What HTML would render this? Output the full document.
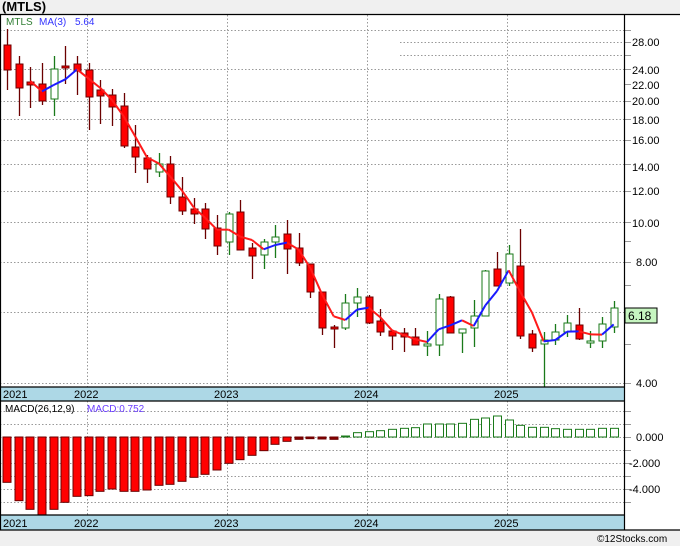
<!DOCTYPE html>
<html><head><meta charset="utf-8"><style>
html,body{margin:0;padding:0;background:#f0f0f0;}
svg{display:block;font-family:"Liberation Sans",sans-serif;}
</style></head><body>
<svg id="s" width="680" height="546" viewBox="0 0 680 546" xmlns="http://www.w3.org/2000/svg">
<rect x="0" y="0" width="680" height="546" fill="#f0f0f0"/>
<rect x="0" y="14" width="680" height="516" fill="#fff"/>
<text x="2" y="11" font-size="13" font-weight="bold" fill="#000">(MTLS)</text>
<g id="grid" stroke="#999" stroke-dasharray="1.5,2" stroke-width="1"></g>
<g id="ticks" stroke="#999" stroke-width="1"></g>
<rect x="0" y="387" width="625" height="14" fill="#add8e6"/>
<rect x="0" y="515" width="625" height="15" fill="#add8e6"/>
<g id="hist"></g>
<g id="cand"></g>
<g id="ma" fill="none" stroke-width="2"></g>
<g stroke="#000" stroke-width="1.2" fill="none">
<line x1="0" y1="14.5" x2="680" y2="14.5"/>
<line x1="624.5" y1="14" x2="624.5" y2="530"/>
<line x1="0" y1="387" x2="625" y2="387"/>
<line x1="0" y1="401" x2="625" y2="401"/>
<line x1="0" y1="515" x2="625" y2="515"/>
<line x1="0" y1="530" x2="680" y2="530"/>
<line x1="0.5" y1="14" x2="0.5" y2="530"/>
</g>
<g font-size="11" fill="#000">
<text x="6" y="25" font-size="10" fill="#2e7d32">MTLS</text>
<text x="39" y="25" font-size="10" fill="#3333ff">MA(3)</text>
<text x="75" y="25" font-size="10" fill="#3333ff">5.64</text>
<text x="632" y="46">28.00</text>
<text x="632" y="74">24.00</text>
<text x="632" y="89">22.00</text>
<text x="632" y="105">20.00</text>
<text x="632" y="124">18.00</text>
<text x="632" y="144">16.00</text>
<text x="632" y="171">14.00</text>
<text x="632" y="195">12.00</text>
<text x="632" y="227">10.00</text>
<text x="636" y="266">8.00</text>
<text x="636" y="387">4.00</text>
<text x="3" y="398">2021</text><text x="74" y="398">2022</text><text x="214" y="398">2023</text><text x="354" y="398">2024</text><text x="494" y="398">2025</text>
<text x="3" y="527">2021</text><text x="74" y="527">2022</text><text x="214" y="527">2023</text><text x="354" y="527">2024</text><text x="494" y="527">2025</text>
<text x="5" y="412" font-size="10">MACD(26,12,9)</text>
<text x="87" y="412" font-size="10" fill="#6a3dff">MACD:0.752</text>
<text x="636" y="441">0.000</text>
<text x="629" y="467">-2.000</text>
<text x="629" y="493">-4.000</text>
<text x="597" y="542" font-size="10" fill="#000">©12Stocks.com</text>
</g>
<rect x="625" y="308" width="32" height="15" fill="#c6f5c0" stroke="#000" stroke-width="1"/>
<text x="628" y="320" font-size="12" fill="#000">6.18</text>
</svg>
<script>
var NS="http://www.w3.org/2000/svg";
function el(p,t,a){var e=document.createElementNS(NS,t);for(var k in a)e.setAttribute(k,a[k]);p.appendChild(e);return e;}
function Y(p){return 383-175.2*Math.log(p/4);}
var g=document.getElementById('grid'),tk=document.getElementById('ticks');
[30,24,20,18,16,14,12,10,8,6,4].forEach(function(p){var y=Math.round(Y(p))+.5;el(g,'line',{x1:0,y1:y,x2:624,y2:y});});
[28,26].forEach(function(p){var y=Math.round(Y(p))+.5;el(g,'line',{x1:400,y1:y,x2:624,y2:y});});
[30,28,26,24,22,20,18,16,14,12,10,9,8,7,6,5,4].forEach(function(p){var y=Math.round(Y(p))+.5;el(tk,'line',{x1:625,y1:y,x2:631,y2:y});});
[411,424,437,450,463,476,489,502].forEach(function(y){el(g,'line',{x1:0,y1:y+.5,x2:624,y2:y+.5});el(tk,'line',{x1:625,y1:y+.5,x2:631,y2:y+.5});});
[87,227,367,507].forEach(function(x){el(g,'line',{x1:x+.5,y1:15,x2:x+.5,y2:387});el(g,'line',{x1:x+.5,y1:401,x2:x+.5,y2:515});});
var C=[[45,70,29,90,0],[64,88,56,116,0],[82,85,67,108,0],[84,101,63,105,0],[69,99,56,116,1],[66,68,46,84,0],[64,71,56,95,0],[70,97,63,130,0],[90,96,80,124,0],[95,107,89,126,0],[106,146,93,148,0],[147,157,125,173,0],[158,169,155,183,0],[164,172,153,177,1],[164,197,156,204,0],[197,211,177,215,0],[209,214,198,224,0],[209,229,203,239,0],[228,246,215,255,0],[214,242,212,255,1],[212,250,200,250,0],[248,256,243,279,0],[242,255,239,269,1],[237,242,225,258,1],[234,249,220,274,0],[248,263,233,266,0],[264,292,264,298,0],[292,328,292,335,0],[327,329,325,348,0],[303,328,294,330,1],[297,303,288,317,1],[297,323,295,324,0],[321,332,309,336,0],[331,336,330,350,0],[333,337,328,352,0],[337,345,328,345,0],[344,346,331,356,1],[299,345,294,356,1],[297,333,296,333,0],[329,333,329,353,1],[316,328,300,347,1],[271,316,270,316,1],[269,286,252,286,0],[254,283,245,286,1],[266,336,229,339,0],[334,348,330,352,0],[340,344,332,387,1],[332,340,324,345,1],[323,332,315,337,1],[325,339,308,340,0],[341,343,331,348,1],[324,341,317,348,1],[308,327,301,333,1]];
var cg=document.getElementById('cand');
var closes=[];
C.forEach(function(c,i){var x=Math.round(7+11.667*i)+.5;var col=c[4]?'#1a7a1a':'#6b0000';
el(cg,'line',{x1:x,y1:c[2],x2:x,y2:c[3],stroke:col,'stroke-width':1.3});
var h=Math.max(c[1]-c[0],1.5);
el(cg,'rect',{x:x-3.5,y:c[0],width:7,height:h,fill:c[4]?'#fff':'#f00',stroke:col,'stroke-width':1});
closes.push(c[4]?c[0]:c[1]);});
var mg=document.getElementById('ma');var prev=null;
for(var i=2;i<C.length;i++){var v=(closes[i]+closes[i-1]+closes[i-2])/3;var x=7+11.667*i;
if(prev){el(mg,'line',{x1:prev[0],y1:prev[1],x2:x,y2:v,stroke:v<prev[1]?'#1a1aff':'#ff1a1a'});}prev=[x,v];}
var R=[307,362,388,405,388,367,349,347,334,327,334,334,330,316,313,304,292,283,270,250,239,226,212,193,184,178,176,177,178];
var G=[168,158,155,152,148,145,143,132,132,132,130,118,114,108,120,136,142,142,146,148,148,148,145,145];
var hg=document.getElementById('hist');
for(var i=0;i<53;i++){var x=Math.round(7+11.667*i)-4;
if(i<R.length){var b=380+R[i]/3;var h=Math.max(b-437,1);el(hg,'rect',{x:x,y:437,width:8,height:h,fill:i<25?'#f00':'#8b0000',stroke:'#6b0000','stroke-width':1});}
else{var t=380+G[i-R.length]/3;el(hg,'rect',{x:x+.5,y:t,width:8,height:437-t,fill:'#fff',stroke:'#1a7a1a','stroke-width':1});}}
</script>
</body></html>
